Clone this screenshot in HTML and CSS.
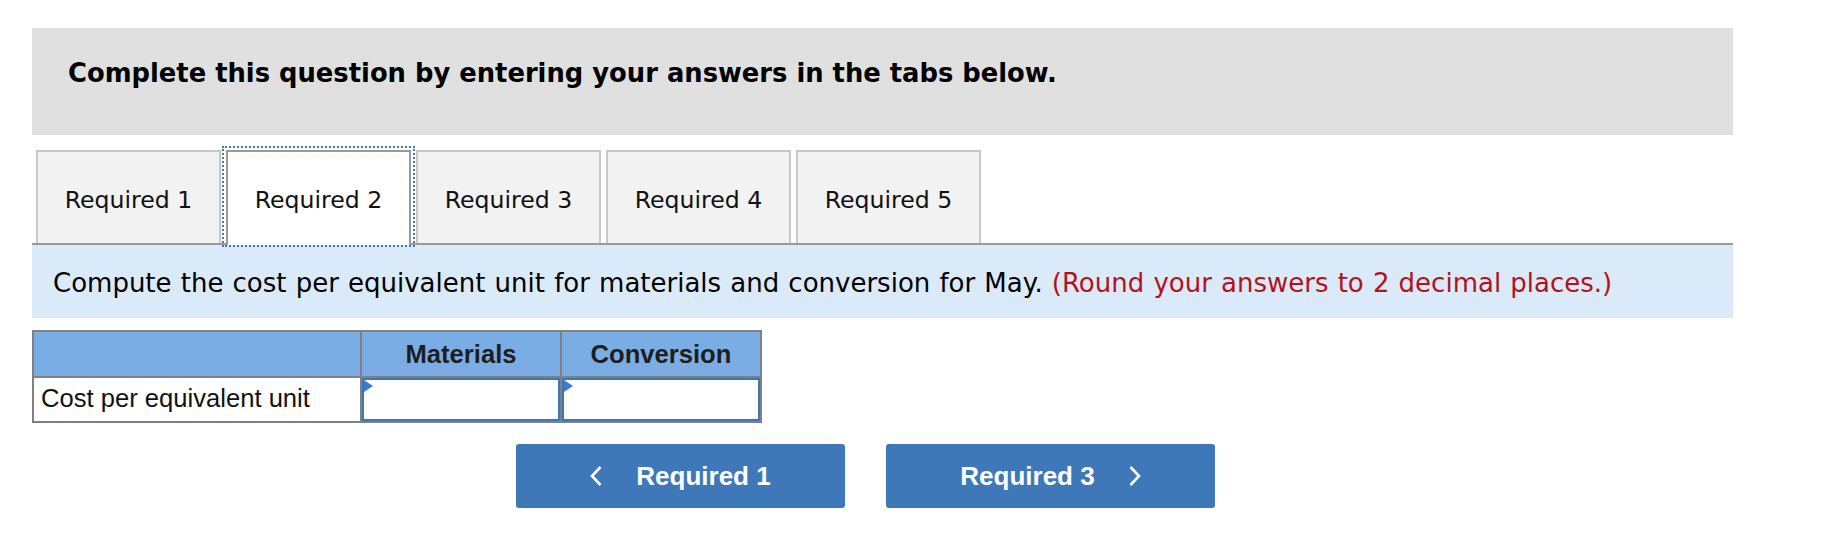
FILE: index.html
```html
<!DOCTYPE html>
<html lang="en">
<head>
<meta charset="utf-8">
<title>Required 2</title>
<link rel="stylesheet" href="styles.css">
</head>
<body>
<div class="page">
  <div class="intro">
    <h1 class="intro-title">Complete this question by entering your answers in the tabs below.</h1>
  </div>

  <div class="tabs">
    <div class="tab">Required 1</div>
    <div class="tab tab-active">Required 2</div>
    <div class="tab">Required 3</div>
    <div class="tab">Required 4</div>
    <div class="tab">Required 5</div>
  </div>

  <div class="panel">
    <p class="panel-text">Compute the cost per equivalent unit for materials and conversion for May. <span class="note">(Round your answers to 2 decimal places.)</span></p>
  </div>

  <table class="grid">
    <thead>
      <tr>
        <th class="col-label"></th>
        <th class="col-val">Materials</th>
        <th class="col-val">Conversion</th>
      </tr>
    </thead>
    <tbody>
      <tr>
        <td class="row-label">Cost per equivalent unit</td>
        <td class="cell-input"><div class="input"><span class="marker"></span></div></td>
        <td class="cell-input"><div class="input"><span class="marker"></span></div></td>
      </tr>
    </tbody>
  </table>

  <div class="nav">
    <button class="nav-btn" type="button">
      <svg class="chev" width="12" height="20" viewBox="0 0 12 20"><polyline points="10.5,1 2,10 10.5,19" fill="none" stroke="#ffffff" stroke-width="2.6"/></svg>
      <span>Required 1</span>
    </button>
    <button class="nav-btn" type="button">
      <span>Required 3</span>
      <svg class="chev" width="12" height="20" viewBox="0 0 12 20"><polyline points="1.5,1 10,10 1.5,19" fill="none" stroke="#ffffff" stroke-width="2.6"/></svg>
    </button>
  </div>
</div>
</body>
</html>
```

FILE: styles.css
```css
html, body {
  margin: 0;
  padding: 0;
  background: #ffffff;
}

.page {
  padding: 28px 0 0 32px;
  width: 1701px;
}

.intro {
  background: #e0e0e0;
  height: 107px;
  box-sizing: border-box;
  padding: 30px 0 0 36px;
}

.intro-title {
  margin: 0;
  font-family: "DejaVu Sans", Verdana, sans-serif;
  font-weight: bold;
  font-size: 25.8px;
  line-height: 30px;
  color: #000000;
}

.tabs {
  display: flex;
  align-items: flex-start;
  gap: 5px;
  height: 93px;
  margin: 15px 0 0 4px;
}

.tab {
  position: relative;
  width: 185px;
  height: 93px;
  box-sizing: border-box;
  border: 2px solid #c8c8c8;
  border-bottom: none;
  background: #f2f2f2;
  font-family: "DejaVu Sans", Verdana, sans-serif;
  font-size: 23.6px;
  line-height: 26px;
  color: #111111;
  text-align: center;
  padding-top: 35px;
  white-space: nowrap;
}

.tab-active {
  background: #ffffff;
  border-color: #999999;
  height: 95px;
  margin-bottom: -2px;
  z-index: 1;
}

.tab-active::after {
  content: "";
  position: absolute;
  top: -6px;
  left: -6px;
  right: -6px;
  bottom: -2px;
  border: 2px dotted #3b79c3;
}

.panel {
  background: #dbeaf8;
  border-top: 2px solid #999999;
  height: 75px;
  box-sizing: border-box;
  padding: 23px 0 0 21px;
}

.panel-text {
  margin: 0;
  font-family: "DejaVu Sans", Verdana, sans-serif;
  font-size: 26px;
  word-spacing: 0.9px;
  line-height: 30px;
  color: #000000;
  white-space: nowrap;
}

.note {
  color: #b3121d;
}

.grid {
  margin-top: 12px;
  border-collapse: separate;
  border-spacing: 0;
  border-top: 2px solid #808080;
  border-left: 2px solid #808080;
  font-family: "Liberation Sans", Arial, sans-serif;
  font-size: 25.6px;
}

.grid th,
.grid td {
  padding: 0;
  border-right: 2px solid #808080;
  border-bottom: 2px solid #808080;
  box-sizing: border-box;
}

.grid th {
  background: #7aade3;
  height: 46px;
  font-weight: bold;
  color: #1e1e1e;
  text-align: center;
  vertical-align: middle;
}

.col-label {
  width: 328px;
}

.col-val {
  width: 200px;
}

.grid td {
  height: 45px;
  vertical-align: middle;
}

.grid td.row-label {
  padding: 0 0 2px 7px;
  color: #111111;
  white-space: nowrap;
}

.input {
  position: relative;
  height: 43px;
  box-sizing: border-box;
  border: 2px solid #3c77b9;
  background: #ffffff;
}

.marker {
  position: absolute;
  top: 0;
  left: 0;
  width: 0;
  height: 0;
  border-left: 9px solid #3d7cc8;
  border-top: 6px solid transparent;
  border-bottom: 6px solid transparent;
}

.nav {
  display: flex;
  justify-content: center;
  gap: 41px;
  margin-top: 21px;
  padding-right: 34px;
}

.nav-btn {
  width: 329px;
  height: 64px;
  border: none;
  border-radius: 3px;
  background: #3e78b9;
  color: #ffffff;
  font-family: "Liberation Sans", Arial, sans-serif;
  font-weight: bold;
  font-size: 26px;
  display: flex;
  align-items: center;
  justify-content: center;
  gap: 34px;
  padding: 0;
}

.chev {
  display: block;
}
```
